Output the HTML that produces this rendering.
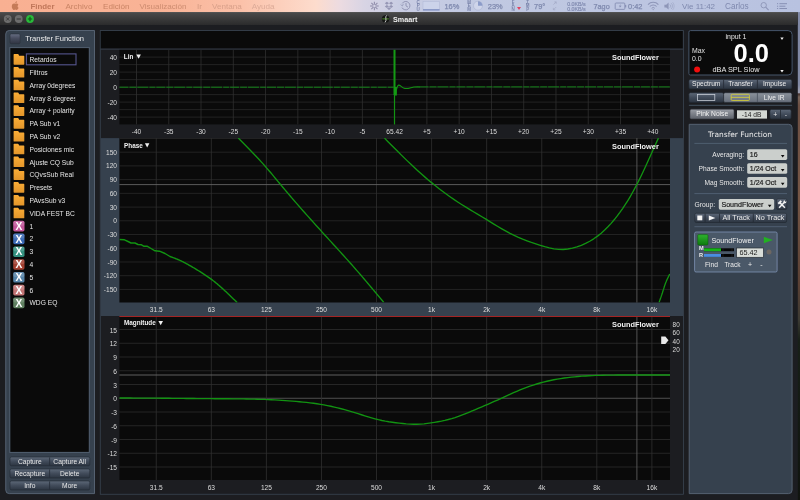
<!DOCTYPE html>
<html lang="es"><head><meta charset="utf-8"><title>Smaart</title>
<style>html,body{margin:0;padding:0;background:#1c1d21;width:800px;height:500px;overflow:hidden}svg text{white-space:pre}</style>
</head><body>
<svg width="800" height="500" viewBox="0 0 800 500" font-family="'Liberation Sans', sans-serif" style="display:block;will-change:transform">
<defs>
<linearGradient id="gMenu" x1="0" y1="0" x2="1" y2="0">
 <stop offset="0" stop-color="#f9b092"/><stop offset="0.2" stop-color="#f9b396"/>
 <stop offset="0.3" stop-color="#fbc1a9"/><stop offset="0.395" stop-color="#fddccd"/>
 <stop offset="0.425" stop-color="#ecdbe1"/><stop offset="0.455" stop-color="#d8d4e4"/><stop offset="0.5" stop-color="#c9cde3"/>
 <stop offset="0.6" stop-color="#c1c9e2"/><stop offset="1" stop-color="#b8c2e0"/>
</linearGradient>
<linearGradient id="gTitle" x1="0" y1="0" x2="0" y2="1"><stop offset="0" stop-color="#4b4b4b"/><stop offset="1" stop-color="#2b2b2c"/></linearGradient>
<linearGradient id="gStrip" x1="0" y1="0" x2="0" y2="1">
 <stop offset="0.024" stop-color="#8088a5"/><stop offset="0.17" stop-color="#8189a3"/><stop offset="0.18" stop-color="#9a9cae"/><stop offset="0.185" stop-color="#9a9cae"/>
 <stop offset="0.188" stop-color="#46322d"/><stop offset="0.194" stop-color="#78645a"/><stop offset="0.21" stop-color="#6e5044"/>
 <stop offset="0.4" stop-color="#765645"/><stop offset="0.57" stop-color="#5a4034"/>
 <stop offset="0.64" stop-color="#3c3a33"/><stop offset="0.68" stop-color="#182018"/><stop offset="1" stop-color="#10140f"/>
</linearGradient>
<linearGradient id="gBtn" x1="0" y1="0" x2="0" y2="1"><stop offset="0" stop-color="#5d6878"/><stop offset="0.5" stop-color="#414b5a"/><stop offset="1" stop-color="#2c3541"/></linearGradient>
<linearGradient id="gBtnSel" x1="0" y1="0" x2="0" y2="1"><stop offset="0" stop-color="#8b929c"/><stop offset="1" stop-color="#676f7b"/></linearGradient>
<linearGradient id="gBtnGrey" x1="0" y1="0" x2="0" y2="1"><stop offset="0" stop-color="#9a9ea6"/><stop offset="1" stop-color="#5d626b"/></linearGradient>
<linearGradient id="gChk" x1="0" y1="0" x2="0" y2="1"><stop offset="0" stop-color="#676e83"/><stop offset="0.45" stop-color="#474c5e"/><stop offset="1" stop-color="#303442"/></linearGradient>
<linearGradient id="gFolder" x1="0" y1="0" x2="0" y2="1"><stop offset="0" stop-color="#fbad36"/><stop offset="1" stop-color="#e3962b"/></linearGradient>
<linearGradient id="gGreen" x1="0" y1="0" x2="0" y2="1"><stop offset="0" stop-color="#2fb32f"/><stop offset="1" stop-color="#0d7a0d"/></linearGradient>
</defs>
<rect x="0" y="0" width="800" height="500" fill="#1c1d21"/>
<rect x="797.8" y="0" width="2.2" height="500" fill="url(#gStrip)"/>
<rect x="0" y="0" width="800" height="12.1" fill="url(#gMenu)"/>
<rect x="0" y="12.1" width="797.8" height="12.9" fill="url(#gTitle)"/>
<line x1="0" y1="12.5" x2="797.6" y2="12.5" stroke="#5a5a5a" stroke-width="0.6" />
<text x="30.4" y="9.24" font-size="7.9" fill="#c0775a" font-weight="bold" >Finder</text>
<text x="65.4" y="9.32" font-size="8.1" fill="#c98465" >Archivo</text>
<text x="103" y="9.32" font-size="8.1" fill="#c98465" >Edición</text>
<text x="139.5" y="9.32" font-size="8.1" fill="#cd8c70" >Visualización</text>
<text x="197" y="9.32" font-size="8.1" fill="#d49a82" >Ir</text>
<text x="212" y="9.32" font-size="8.1" fill="#d8a08a" >Ventana</text>
<text x="251.7" y="9.32" font-size="8.1" fill="#dcab98" >Ayuda</text>
<g fill="#c57b58"><path d="M15.2 3.9 C14.2 3.2 12 3.4 11.8 6.2 C11.7 8.2 13 10 14 9.9 C14.6 9.85 14.8 9.6 15.3 9.6 C15.8 9.6 16 9.9 16.6 9.9 C17.5 9.9 18.3 8.6 18.6 7.8 C17.3 7.2 17.3 5.3 18.4 4.7 C17.7 3.5 16.2 3.3 15.2 3.9Z"/><path d="M15.3 3.2 C15.3 2.2 16.1 1.4 17 1.3 C17.1 2.3 16.3 3.2 15.3 3.2Z"/></g>
<text x="444.4" y="9.08" font-size="7.45" fill="#7f89ae" stroke="#7f89ae" stroke-width="0.25">16%</text>
<text x="487.8" y="9.08" font-size="7.45" fill="#7f89ae" stroke="#7f89ae" stroke-width="0.25">23%</text>
<text x="534" y="9.08" font-size="7.45" fill="#7f89ae" stroke="#7f89ae" stroke-width="0.25">79°</text>
<text x="567.2" y="5.51" font-size="5.3" fill="#7d87ad" stroke="#7d87ad" stroke-width="0.15">0.0KB/s</text>
<text x="567.2" y="10.61" font-size="5.3" fill="#7d87ad" stroke="#7d87ad" stroke-width="0.15">0.0KB/s</text>
<text x="593.5" y="9.03" font-size="7.3" fill="#7f89ae" stroke="#7f89ae" stroke-width="0.25">7ago</text>
<text x="628" y="9.08" font-size="7.45" fill="#7f89ae" stroke="#7f89ae" stroke-width="0.25">0:42</text>
<text x="682" y="9.28" font-size="8" fill="#7f89ae" >Vie 11:42</text>
<text x="725" y="9.35" font-size="8.2" fill="#7f89ae" >Carlos</text>
<g stroke="#928fac" stroke-width="1.1" fill="none"><path d="M375.6 6 L378.7 6"/><path d="M375.25 6.85 L377.44 9.04"/><path d="M374.4 7.2 L374.4 10.3"/><path d="M373.55 6.85 L371.36 9.04"/><path d="M373.2 6 L370.1 6"/><path d="M373.55 5.15 L371.36 2.96"/><path d="M374.4 4.8 L374.4 1.7"/><path d="M375.25 5.15 L377.44 2.96"/></g>
<g fill="#8f8fae"><path d="M386.9 1.8 l2.1 1.5 l-2.1 1.5 l-2.1 -1.5z M391.1 1.8 l2.1 1.5 l-2.1 1.5 l-2.1 -1.5z M386.9 4.9 l2.1 1.5 l-2.1 1.5 l-2.1 -1.5z M391.1 4.9 l2.1 1.5 l-2.1 1.5 l-2.1 -1.5z M389 7.2 l2 1.4 l-2 1.5 l-2 -1.5z" opacity="0.9"/></g>
<g stroke="#8d90b0" stroke-width="0.9" fill="none"><path d="M402.2 3.4 A4.2 4.2 0 1 1 402 7.6"/><path d="M406 3 V5.9 L408 7.2"/><path d="M400.6 4.6 l1.8 1.4 l1 -2.2" stroke-width="0.7"/></g>
<text x="418.2" y="4.32" font-size="4.5" fill="#7a84ab" text-anchor="middle" font-weight="bold" >C</text>
<text x="418.2" y="7.47" font-size="4.5" fill="#7a84ab" text-anchor="middle" font-weight="bold" >P</text>
<text x="418.2" y="10.62" font-size="4.5" fill="#7a84ab" text-anchor="middle" font-weight="bold" >U</text>
<text x="469.2" y="4.32" font-size="4.5" fill="#7a84ab" text-anchor="middle" font-weight="bold" >M</text>
<text x="469.2" y="7.47" font-size="4.5" fill="#7a84ab" text-anchor="middle" font-weight="bold" >E</text>
<text x="469.2" y="10.62" font-size="4.5" fill="#7a84ab" text-anchor="middle" font-weight="bold" >M</text>
<text x="513" y="4.32" font-size="4.5" fill="#7a84ab" text-anchor="middle" font-weight="bold" >F</text>
<text x="513" y="7.47" font-size="4.5" fill="#7a84ab" text-anchor="middle" font-weight="bold" >A</text>
<text x="513" y="10.62" font-size="4.5" fill="#7a84ab" text-anchor="middle" font-weight="bold" >N</text>
<text x="527.7" y="4.32" font-size="4.5" fill="#7a84ab" text-anchor="middle" font-weight="bold" >T</text>
<text x="527.7" y="7.47" font-size="4.5" fill="#7a84ab" text-anchor="middle" font-weight="bold" >M</text>
<text x="527.7" y="10.62" font-size="4.5" fill="#7a84ab" text-anchor="middle" font-weight="bold" >P</text>
<rect x="423" y="1.4" width="16.6" height="9.2" fill="#ccd3ea" stroke="#b0b8d6" stroke-width="0.5"/>
<rect x="423" y="9" width="16.6" height="1.6" fill="#8b99c7"/>
<circle cx="478" cy="5.7" r="4.5" fill="#cfd5ea" stroke="#a9b1d0" stroke-width="0.6"/><path d="M478 5.7 V1.2 A4.5 4.5 0 0 1 482.5 5.7z" fill="#8b9bc9"/>
<path d="M519 1.8 l1.9 2.8 h-3.8z" fill="#c4c7d9"/><path d="M519 10 l2 -3 h-4z" fill="#e2425f"/>
<g stroke="#a2a9c6" stroke-width="0.7" fill="none"><path d="M553.4 4.6 L556.2 1.9 M554.3 1.9 H556.2 V3.8"/><path d="M556.2 7 L553.4 9.8 M555.3 9.8 H553.4 V7.9"/></g>
<rect x="615.2" y="3" width="9.6" height="6.4" rx="0.8" fill="none" stroke="#7f88ad" stroke-width="0.8"/><rect x="625.2" y="5" width="1" height="2.4" fill="#7f88ad"/><path d="M620.8 4 l-2 2.4 h1.5 l-0.9 1.9 l2.2 -2.6 h-1.5z" fill="#7f88ad"/>
<g stroke="#8e96b8" fill="none" stroke-width="1.1"><path d="M648 4.6 A7 7 0 0 1 658.4 4.6"/><path d="M649.8 6.5 A4.6 4.6 0 0 1 656.6 6.5"/><path d="M651.6 8.3 A2.2 2.2 0 0 1 654.8 8.3" stroke-width="1"/></g><circle cx="653.2" cy="9.6" r="0.7" fill="#8e96b8"/>
<path d="M664.4 4.7 h1.8 l2.4 -2.1 v7 l-2.4 -2.1 h-1.8z" fill="#8e96b8"/><g stroke="#9aa2c2" fill="none" stroke-width="0.7"><path d="M669.8 4.4 A2.2 2.2 0 0 1 669.8 7.8"/><path d="M671.2 3.2 A4 4 0 0 1 671.2 9"/><path d="M672.6 2.2 A5.6 5.6 0 0 1 672.6 10" opacity="0.7"/></g>
<g stroke="#8c94b6" fill="none" stroke-width="0.9"><circle cx="763.7" cy="5.2" r="2.7"/><path d="M765.7 7.2 L768.6 10.1" stroke-width="1.1"/></g>
<rect x="777.1" y="3.25" width="1" height="0.9" fill="#7c85ab"/>
<rect x="779.4" y="3.2" width="7.6" height="1" fill="#8790b4"/>
<rect x="777.1" y="5.75" width="1" height="0.9" fill="#7c85ab"/>
<rect x="779.4" y="5.7" width="6" height="1" fill="#8790b4"/>
<rect x="777.1" y="8.05" width="1" height="0.9" fill="#7c85ab"/>
<rect x="779.4" y="8" width="7.6" height="1" fill="#8790b4"/>
<circle cx="7.75" cy="19" r="3.9" fill="#6d6d6d"/>
<circle cx="18.75" cy="19" r="3.9" fill="#6d6d6d"/>
<circle cx="30" cy="19" r="3.9" fill="#29ba3a"/>
<path d="M6.2 17.4 L9.3 20.6 M9.3 17.4 L6.2 20.6" stroke="#3a3a3a" stroke-width="0.9" fill="none"/>
<line x1="16.6" y1="19" x2="20.9" y2="19" stroke="#3a3a3a" stroke-width="1.1" />
<path d="M27.8 19 H32.2 M30 16.8 V21.2" stroke="#0d5c16" stroke-width="1.2" fill="none"/>
<circle cx="385.6" cy="18.9" r="3.7" fill="#141614"/><path d="M382.3 18.9 H388.9" stroke="#4f8a2a" stroke-width="1"/><path d="M386.6 15.4 C384.4 17 387.4 20 385 22.4" stroke="#d8d8d8" stroke-width="0.9" fill="none"/>
<text x="393" y="21.59" font-size="7.2" fill="#f0f0f0" font-weight="bold" >Smaart</text>
<path d="M9.25 30.5 H94.5 V493.6 H9.25 A3.5 3.5 0 0 1 5.75 490.1 V34 A3.5 3.5 0 0 1 9.25 30.5Z" fill="#36414e" stroke="#5a6878" stroke-width="0.9"/>
<rect x="10" y="33.9" width="10.1" height="9.8" fill="url(#gChk)" rx="1.2" stroke="#2a303b" stroke-width="0.6"/>
<text x="25.2" y="41.42" font-size="7.56" fill="#ececec" >Transfer Function</text>
<rect x="9.8" y="47.6" width="79.5" height="404.8" fill="#0a0a0a" stroke="#536172" stroke-width="1"/>
<clipPath id="cList"><rect x="10.2" y="48" width="65" height="404"/></clipPath>
<rect x="26.4" y="53.9" width="49.6" height="10.9" fill="#0a0a0a" stroke="#56568f" stroke-width="1.1"/>
<g clip-path="url(#cList)">
<path d="M13.6 56.3 v-1.6 q0 -0.6 0.6 -0.6 h3.7 q0.5 0 0.7 0.5 l0.5 1.2 h4.6 q0.6 0 0.6 0.6 v7.7 q0 0.6 -0.6 0.6 h-9.5 q-0.6 0 -0.6 -0.6 z" fill="url(#gFolder)"/>
<text x="29.5" y="62.21" font-size="6.7" fill="#e6e6e6" >Retardos</text>
<path d="M13.6 69.1 v-1.6 q0 -0.6 0.6 -0.6 h3.7 q0.5 0 0.7 0.5 l0.5 1.2 h4.6 q0.6 0 0.6 0.6 v7.7 q0 0.6 -0.6 0.6 h-9.5 q-0.6 0 -0.6 -0.6 z" fill="url(#gFolder)"/>
<text x="29.5" y="75.01" font-size="6.7" fill="#e6e6e6" >Filtros</text>
<path d="M13.6 81.9 v-1.6 q0 -0.6 0.6 -0.6 h3.7 q0.5 0 0.7 0.5 l0.5 1.2 h4.6 q0.6 0 0.6 0.6 v7.7 q0 0.6 -0.6 0.6 h-9.5 q-0.6 0 -0.6 -0.6 z" fill="url(#gFolder)"/>
<text x="29.5" y="87.81" font-size="6.7" fill="#e6e6e6" >Array 0degrees</text>
<path d="M13.6 94.7 v-1.6 q0 -0.6 0.6 -0.6 h3.7 q0.5 0 0.7 0.5 l0.5 1.2 h4.6 q0.6 0 0.6 0.6 v7.7 q0 0.6 -0.6 0.6 h-9.5 q-0.6 0 -0.6 -0.6 z" fill="url(#gFolder)"/>
<text x="29.5" y="100.61" font-size="6.7" fill="#e6e6e6" >Array 8 degrees</text>
<path d="M13.6 107.5 v-1.6 q0 -0.6 0.6 -0.6 h3.7 q0.5 0 0.7 0.5 l0.5 1.2 h4.6 q0.6 0 0.6 0.6 v7.7 q0 0.6 -0.6 0.6 h-9.5 q-0.6 0 -0.6 -0.6 z" fill="url(#gFolder)"/>
<text x="29.5" y="113.41" font-size="6.7" fill="#e6e6e6" >Array + polarity</text>
<path d="M13.6 120.3 v-1.6 q0 -0.6 0.6 -0.6 h3.7 q0.5 0 0.7 0.5 l0.5 1.2 h4.6 q0.6 0 0.6 0.6 v7.7 q0 0.6 -0.6 0.6 h-9.5 q-0.6 0 -0.6 -0.6 z" fill="url(#gFolder)"/>
<text x="29.5" y="126.21" font-size="6.7" fill="#e6e6e6" >PA Sub v1</text>
<path d="M13.6 133.1 v-1.6 q0 -0.6 0.6 -0.6 h3.7 q0.5 0 0.7 0.5 l0.5 1.2 h4.6 q0.6 0 0.6 0.6 v7.7 q0 0.6 -0.6 0.6 h-9.5 q-0.6 0 -0.6 -0.6 z" fill="url(#gFolder)"/>
<text x="29.5" y="139.01" font-size="6.7" fill="#e6e6e6" >PA Sub v2</text>
<path d="M13.6 145.9 v-1.6 q0 -0.6 0.6 -0.6 h3.7 q0.5 0 0.7 0.5 l0.5 1.2 h4.6 q0.6 0 0.6 0.6 v7.7 q0 0.6 -0.6 0.6 h-9.5 q-0.6 0 -0.6 -0.6 z" fill="url(#gFolder)"/>
<text x="29.5" y="151.81" font-size="6.7" fill="#e6e6e6" >Posiciones mic</text>
<path d="M13.6 158.7 v-1.6 q0 -0.6 0.6 -0.6 h3.7 q0.5 0 0.7 0.5 l0.5 1.2 h4.6 q0.6 0 0.6 0.6 v7.7 q0 0.6 -0.6 0.6 h-9.5 q-0.6 0 -0.6 -0.6 z" fill="url(#gFolder)"/>
<text x="29.5" y="164.61" font-size="6.7" fill="#e6e6e6" >Ajuste CQ Sub</text>
<path d="M13.6 171.5 v-1.6 q0 -0.6 0.6 -0.6 h3.7 q0.5 0 0.7 0.5 l0.5 1.2 h4.6 q0.6 0 0.6 0.6 v7.7 q0 0.6 -0.6 0.6 h-9.5 q-0.6 0 -0.6 -0.6 z" fill="url(#gFolder)"/>
<text x="29.5" y="177.41" font-size="6.7" fill="#e6e6e6" >CQvsSub Real</text>
<path d="M13.6 184.3 v-1.6 q0 -0.6 0.6 -0.6 h3.7 q0.5 0 0.7 0.5 l0.5 1.2 h4.6 q0.6 0 0.6 0.6 v7.7 q0 0.6 -0.6 0.6 h-9.5 q-0.6 0 -0.6 -0.6 z" fill="url(#gFolder)"/>
<text x="29.5" y="190.21" font-size="6.7" fill="#e6e6e6" >Presets</text>
<path d="M13.6 197.1 v-1.6 q0 -0.6 0.6 -0.6 h3.7 q0.5 0 0.7 0.5 l0.5 1.2 h4.6 q0.6 0 0.6 0.6 v7.7 q0 0.6 -0.6 0.6 h-9.5 q-0.6 0 -0.6 -0.6 z" fill="url(#gFolder)"/>
<text x="29.5" y="203.01" font-size="6.7" fill="#e6e6e6" >PAvsSub v3</text>
<path d="M13.6 209.9 v-1.6 q0 -0.6 0.6 -0.6 h3.7 q0.5 0 0.7 0.5 l0.5 1.2 h4.6 q0.6 0 0.6 0.6 v7.7 q0 0.6 -0.6 0.6 h-9.5 q-0.6 0 -0.6 -0.6 z" fill="url(#gFolder)"/>
<text x="29.5" y="215.81" font-size="6.7" fill="#e6e6e6" >VIDA FEST BC</text>
<rect x="13.2" y="220.8" width="11.3" height="10.6" fill="#c2559a" rx="1.7"/>
<rect x="13.2" y="220.8" width="11.3" height="4.9" fill="#ffffff" rx="1.7" opacity="0.13"/>
<text x="18.85" y="229.77" font-size="10.2" fill="#ffffff" text-anchor="middle" font-weight="bold" >X</text>
<text x="29.5" y="228.61" font-size="6.7" fill="#e6e6e6" >1</text>
<rect x="13.2" y="233.6" width="11.3" height="10.6" fill="#3a69b4" rx="1.7"/>
<rect x="13.2" y="233.6" width="11.3" height="4.9" fill="#ffffff" rx="1.7" opacity="0.13"/>
<text x="18.85" y="242.57" font-size="10.2" fill="#ffffff" text-anchor="middle" font-weight="bold" >X</text>
<text x="29.5" y="241.41" font-size="6.7" fill="#e6e6e6" >2</text>
<rect x="13.2" y="246.4" width="11.3" height="10.6" fill="#33917f" rx="1.7"/>
<rect x="13.2" y="246.4" width="11.3" height="4.9" fill="#ffffff" rx="1.7" opacity="0.13"/>
<text x="18.85" y="255.37" font-size="10.2" fill="#ffffff" text-anchor="middle" font-weight="bold" >X</text>
<text x="29.5" y="254.21" font-size="6.7" fill="#e6e6e6" >3</text>
<rect x="13.2" y="259.2" width="11.3" height="10.6" fill="#a23f30" rx="1.7"/>
<rect x="13.2" y="259.2" width="11.3" height="4.9" fill="#ffffff" rx="1.7" opacity="0.13"/>
<text x="18.85" y="268.17" font-size="10.2" fill="#ffffff" text-anchor="middle" font-weight="bold" >X</text>
<text x="29.5" y="267.01" font-size="6.7" fill="#e6e6e6" >4</text>
<rect x="13.2" y="272" width="11.3" height="10.6" fill="#5482a6" rx="1.7"/>
<rect x="13.2" y="272" width="11.3" height="4.9" fill="#ffffff" rx="1.7" opacity="0.13"/>
<text x="18.85" y="280.97" font-size="10.2" fill="#ffffff" text-anchor="middle" font-weight="bold" >X</text>
<text x="29.5" y="279.81" font-size="6.7" fill="#e6e6e6" >5</text>
<rect x="13.2" y="284.8" width="11.3" height="10.6" fill="#c27474" rx="1.7"/>
<rect x="13.2" y="284.8" width="11.3" height="4.9" fill="#ffffff" rx="1.7" opacity="0.13"/>
<text x="18.85" y="293.77" font-size="10.2" fill="#ffffff" text-anchor="middle" font-weight="bold" >X</text>
<text x="29.5" y="292.61" font-size="6.7" fill="#e6e6e6" >6</text>
<rect x="13.2" y="297.6" width="11.3" height="10.6" fill="#5f8060" rx="1.7"/>
<rect x="13.2" y="297.6" width="11.3" height="4.9" fill="#ffffff" rx="1.7" opacity="0.13"/>
<text x="18.85" y="306.57" font-size="10.2" fill="#ffffff" text-anchor="middle" font-weight="bold" >X</text>
<text x="29.5" y="305.41" font-size="6.7" fill="#e6e6e6" >WDG EQ</text>
</g>
<rect x="10" y="457" width="79.8" height="8.8" fill="url(#gBtn)" rx="1.5" stroke="#222a34" stroke-width="0.6"/>
<line x1="49.6" y1="457.4" x2="49.6" y2="465.4" stroke="#252c37" stroke-width="0.8" />
<text x="29.8" y="463.59" font-size="6.65" fill="#e8e8e8" text-anchor="middle" >Capture</text>
<text x="69.7" y="463.61" font-size="6.7" fill="#e8e8e8" text-anchor="middle" >Capture All</text>
<rect x="10" y="469" width="79.8" height="9" fill="url(#gBtn)" rx="1.5" stroke="#222a34" stroke-width="0.6"/>
<line x1="49.6" y1="469.4" x2="49.6" y2="477.6" stroke="#252c37" stroke-width="0.8" />
<text x="29.8" y="475.79" font-size="6.65" fill="#e8e8e8" text-anchor="middle" >Recapture</text>
<text x="69.7" y="475.81" font-size="6.7" fill="#e8e8e8" text-anchor="middle" >Delete</text>
<rect x="10" y="481" width="79.8" height="9" fill="url(#gBtn)" rx="1.5" stroke="#222a34" stroke-width="0.6"/>
<line x1="49.6" y1="481.4" x2="49.6" y2="489.6" stroke="#252c37" stroke-width="0.8" />
<text x="29.8" y="487.99" font-size="6.65" fill="#e8e8e8" text-anchor="middle" >Info</text>
<text x="69.7" y="488.01" font-size="6.7" fill="#e8e8e8" text-anchor="middle" >More</text>
<rect x="100.25" y="30.6" width="583.15" height="463.65" fill="#1c1d21" stroke="#3a4552" stroke-width="0.8"/>
<rect x="100.8" y="31" width="581.8" height="17.6" fill="#0a0a0a"/>
<line x1="100.6" y1="49.1" x2="683" y2="49.1" stroke="#3a4450" stroke-width="0.9" />
<rect x="119.4" y="49.8" width="550.6" height="74.6" fill="#0a0a0a"/>
<line x1="119.4" y1="57.1" x2="670" y2="57.1" stroke="#292929" stroke-width="0.8" />
<line x1="119.4" y1="64.6" x2="670" y2="64.6" stroke="#292929" stroke-width="0.8" />
<line x1="119.4" y1="72.1" x2="670" y2="72.1" stroke="#292929" stroke-width="0.8" />
<line x1="119.4" y1="79.6" x2="670" y2="79.6" stroke="#292929" stroke-width="0.8" />
<line x1="119.4" y1="87.1" x2="670" y2="87.1" stroke="#292929" stroke-width="0.8" />
<line x1="119.4" y1="94.6" x2="670" y2="94.6" stroke="#292929" stroke-width="0.8" />
<line x1="119.4" y1="102.1" x2="670" y2="102.1" stroke="#292929" stroke-width="0.8" />
<line x1="119.4" y1="109.6" x2="670" y2="109.6" stroke="#292929" stroke-width="0.8" />
<line x1="119.4" y1="117.1" x2="670" y2="117.1" stroke="#292929" stroke-width="0.8" />
<line x1="136.5" y1="49.8" x2="136.5" y2="124.4" stroke="#303030" stroke-width="0.8" />
<line x1="168.77" y1="49.8" x2="168.77" y2="124.4" stroke="#303030" stroke-width="0.8" />
<line x1="201.03" y1="49.8" x2="201.03" y2="124.4" stroke="#303030" stroke-width="0.8" />
<line x1="233.3" y1="49.8" x2="233.3" y2="124.4" stroke="#303030" stroke-width="0.8" />
<line x1="265.56" y1="49.8" x2="265.56" y2="124.4" stroke="#303030" stroke-width="0.8" />
<line x1="297.83" y1="49.8" x2="297.83" y2="124.4" stroke="#303030" stroke-width="0.8" />
<line x1="330.1" y1="49.8" x2="330.1" y2="124.4" stroke="#303030" stroke-width="0.8" />
<line x1="362.36" y1="49.8" x2="362.36" y2="124.4" stroke="#303030" stroke-width="0.8" />
<line x1="394.63" y1="49.8" x2="394.63" y2="124.4" stroke="#303030" stroke-width="0.8" />
<line x1="426.89" y1="49.8" x2="426.89" y2="124.4" stroke="#303030" stroke-width="0.8" />
<line x1="459.16" y1="49.8" x2="459.16" y2="124.4" stroke="#303030" stroke-width="0.8" />
<line x1="491.43" y1="49.8" x2="491.43" y2="124.4" stroke="#303030" stroke-width="0.8" />
<line x1="523.69" y1="49.8" x2="523.69" y2="124.4" stroke="#303030" stroke-width="0.8" />
<line x1="555.96" y1="49.8" x2="555.96" y2="124.4" stroke="#303030" stroke-width="0.8" />
<line x1="588.22" y1="49.8" x2="588.22" y2="124.4" stroke="#303030" stroke-width="0.8" />
<line x1="620.49" y1="49.8" x2="620.49" y2="124.4" stroke="#303030" stroke-width="0.8" />
<line x1="652.76" y1="49.8" x2="652.76" y2="124.4" stroke="#303030" stroke-width="0.8" />
<text x="117" y="59.98" font-size="6.6" fill="#dcdcdc" text-anchor="end" >40</text>
<text x="117" y="74.98" font-size="6.6" fill="#dcdcdc" text-anchor="end" >20</text>
<text x="117" y="89.98" font-size="6.6" fill="#dcdcdc" text-anchor="end" >0</text>
<text x="117" y="104.98" font-size="6.6" fill="#dcdcdc" text-anchor="end" >-20</text>
<text x="117" y="119.98" font-size="6.6" fill="#dcdcdc" text-anchor="end" >-40</text>
<text x="136.5" y="134.28" font-size="6.6" fill="#dcdcdc" text-anchor="middle" >-40</text>
<text x="168.77" y="134.28" font-size="6.6" fill="#dcdcdc" text-anchor="middle" >-35</text>
<text x="201.03" y="134.28" font-size="6.6" fill="#dcdcdc" text-anchor="middle" >-30</text>
<text x="233.3" y="134.28" font-size="6.6" fill="#dcdcdc" text-anchor="middle" >-25</text>
<text x="265.56" y="134.28" font-size="6.6" fill="#dcdcdc" text-anchor="middle" >-20</text>
<text x="297.83" y="134.28" font-size="6.6" fill="#dcdcdc" text-anchor="middle" >-15</text>
<text x="330.1" y="134.28" font-size="6.6" fill="#dcdcdc" text-anchor="middle" >-10</text>
<text x="362.36" y="134.28" font-size="6.6" fill="#dcdcdc" text-anchor="middle" >-5</text>
<text x="394.63" y="134.28" font-size="6.6" fill="#dcdcdc" text-anchor="middle" >65.42</text>
<text x="426.89" y="134.28" font-size="6.6" fill="#dcdcdc" text-anchor="middle" >+5</text>
<text x="459.16" y="134.28" font-size="6.6" fill="#dcdcdc" text-anchor="middle" >+10</text>
<text x="491.43" y="134.28" font-size="6.6" fill="#dcdcdc" text-anchor="middle" >+15</text>
<text x="523.69" y="134.28" font-size="6.6" fill="#dcdcdc" text-anchor="middle" >+20</text>
<text x="555.96" y="134.28" font-size="6.6" fill="#dcdcdc" text-anchor="middle" >+25</text>
<text x="588.22" y="134.28" font-size="6.6" fill="#dcdcdc" text-anchor="middle" >+30</text>
<text x="620.49" y="134.28" font-size="6.6" fill="#dcdcdc" text-anchor="middle" >+35</text>
<text x="652.76" y="134.28" font-size="6.6" fill="#dcdcdc" text-anchor="middle" >+40</text>
<text x="123.8" y="58.9" font-size="6.4" fill="#f0f0f0" font-weight="bold" >Lin</text>
<path d="M136.3 54.5 h4.6 l-2.3 4.2z" fill="#f0f0f0"/>
<text x="658.8" y="59.66" font-size="7.38" fill="#f0f0f0" text-anchor="end" font-weight="bold" >SoundFlower</text>
<line x1="119.4" y1="87.2" x2="393.6" y2="87.2" stroke="#139018" stroke-width="0.9" stroke-dasharray="9 1 7 0.9 11 1.1 6 0.9"/>
<path d="M394.5 95 V124.4" stroke="#129312" stroke-width="1.2" fill="none"/>
<path d="M394.5 49.8 V95" stroke="#149a14" stroke-width="2" fill="none"/>
<path d="M394.3 87 L397 87 L396.8 95.4 L394.3 95.4 Z" fill="#149a14"/>
<path d="M396.6 89.5 C397.2 86.2 398 85.1 398.8 85.1 C400.2 85.1 401.5 87 403.5 87.9 C405.5 88.7 408 88.5 410 87.9 C412.5 87.2 415 86.8 418 86.8 L420 86.9" stroke="#129312" stroke-width="1.05" fill="none"/>
<line x1="419.5" y1="86.9" x2="670" y2="86.9" stroke="#139018" stroke-width="0.9" stroke-dasharray="9 1 7 0.9 11 1.1 6 0.9"/>
<rect x="100.7" y="138.1" width="582.3" height="177.9" fill="#36414e"/>
<rect x="119.4" y="138.1" width="550.6" height="164.4" fill="#0a0a0a"/>
<line x1="119.4" y1="289.43" x2="670" y2="289.43" stroke="#292929" stroke-width="0.8" />
<line x1="119.4" y1="275.7" x2="670" y2="275.7" stroke="#292929" stroke-width="0.8" />
<line x1="119.4" y1="261.98" x2="670" y2="261.98" stroke="#292929" stroke-width="0.8" />
<line x1="119.4" y1="248.25" x2="670" y2="248.25" stroke="#292929" stroke-width="0.8" />
<line x1="119.4" y1="234.53" x2="670" y2="234.53" stroke="#292929" stroke-width="0.8" />
<line x1="119.4" y1="220.8" x2="670" y2="220.8" stroke="#292929" stroke-width="0.8" />
<line x1="119.4" y1="207.08" x2="670" y2="207.08" stroke="#292929" stroke-width="0.8" />
<line x1="119.4" y1="193.35" x2="670" y2="193.35" stroke="#292929" stroke-width="0.8" />
<line x1="119.4" y1="179.62" x2="670" y2="179.62" stroke="#292929" stroke-width="0.8" />
<line x1="119.4" y1="165.9" x2="670" y2="165.9" stroke="#292929" stroke-width="0.8" />
<line x1="119.4" y1="152.18" x2="670" y2="152.18" stroke="#292929" stroke-width="0.8" />
<line x1="119.4" y1="138.45" x2="670" y2="138.45" stroke="#292929" stroke-width="0.8" />
<line x1="156.25" y1="138.1" x2="156.25" y2="302.5" stroke="#303030" stroke-width="0.8" />
<line x1="211.32" y1="138.1" x2="211.32" y2="302.5" stroke="#303030" stroke-width="0.8" />
<line x1="266.39" y1="138.1" x2="266.39" y2="302.5" stroke="#303030" stroke-width="0.8" />
<line x1="321.46" y1="138.1" x2="321.46" y2="302.5" stroke="#303030" stroke-width="0.8" />
<line x1="376.53" y1="138.1" x2="376.53" y2="302.5" stroke="#303030" stroke-width="0.8" />
<line x1="431.6" y1="138.1" x2="431.6" y2="302.5" stroke="#303030" stroke-width="0.8" />
<line x1="486.67" y1="138.1" x2="486.67" y2="302.5" stroke="#303030" stroke-width="0.8" />
<line x1="541.74" y1="138.1" x2="541.74" y2="302.5" stroke="#303030" stroke-width="0.8" />
<line x1="596.81" y1="138.1" x2="596.81" y2="302.5" stroke="#303030" stroke-width="0.8" />
<line x1="651.88" y1="138.1" x2="651.88" y2="302.5" stroke="#303030" stroke-width="0.8" />
<text x="117" y="292" font-size="6.6" fill="#dcdcdc" text-anchor="end" >-150</text>
<text x="117" y="278.28" font-size="6.6" fill="#dcdcdc" text-anchor="end" >-120</text>
<text x="117" y="264.55" font-size="6.6" fill="#dcdcdc" text-anchor="end" >-90</text>
<text x="117" y="250.83" font-size="6.6" fill="#dcdcdc" text-anchor="end" >-60</text>
<text x="117" y="237.1" font-size="6.6" fill="#dcdcdc" text-anchor="end" >-30</text>
<text x="117" y="223.38" font-size="6.6" fill="#dcdcdc" text-anchor="end" >0</text>
<text x="117" y="209.65" font-size="6.6" fill="#dcdcdc" text-anchor="end" >30</text>
<text x="117" y="195.93" font-size="6.6" fill="#dcdcdc" text-anchor="end" >60</text>
<text x="117" y="182.2" font-size="6.6" fill="#dcdcdc" text-anchor="end" >90</text>
<text x="117" y="168.48" font-size="6.6" fill="#dcdcdc" text-anchor="end" >120</text>
<text x="117" y="154.75" font-size="6.6" fill="#dcdcdc" text-anchor="end" >150</text>
<text x="156.25" y="312.18" font-size="6.6" fill="#dcdcdc" text-anchor="middle" >31.5</text>
<text x="211.32" y="312.18" font-size="6.6" fill="#dcdcdc" text-anchor="middle" >63</text>
<text x="266.39" y="312.18" font-size="6.6" fill="#dcdcdc" text-anchor="middle" >125</text>
<text x="321.46" y="312.18" font-size="6.6" fill="#dcdcdc" text-anchor="middle" >250</text>
<text x="376.53" y="312.18" font-size="6.6" fill="#dcdcdc" text-anchor="middle" >500</text>
<text x="431.6" y="312.18" font-size="6.6" fill="#dcdcdc" text-anchor="middle" >1k</text>
<text x="486.67" y="312.18" font-size="6.6" fill="#dcdcdc" text-anchor="middle" >2k</text>
<text x="541.74" y="312.18" font-size="6.6" fill="#dcdcdc" text-anchor="middle" >4k</text>
<text x="596.81" y="312.18" font-size="6.6" fill="#dcdcdc" text-anchor="middle" >8k</text>
<text x="651.88" y="312.18" font-size="6.6" fill="#dcdcdc" text-anchor="middle" >16k</text>
<line x1="119.4" y1="184.6" x2="670" y2="184.6" stroke="#646464" stroke-width="0.9" />
<line x1="636.9" y1="138.1" x2="636.9" y2="302.5" stroke="#5c5c5c" stroke-width="0.9" />
<clipPath id="cPh"><rect x="119.4" y="138.1" width="550.6" height="164.4"/></clipPath>
<path d="M119.4 239.5 L124.5 239.8 L128 241.5 L131 243 L135 243 L138 244.5 L141.5 244.8 L144 246.3 L147 246.2 L151 248.5 L155 250.8 L159.5 251.2 L165 253.5 L170 256.5 L173.74 257.84 L174.57 258.16 L175.4 258.48 L176.23 258.81 L177.05 259.15 L177.87 259.49 L178.68 259.85 L179.5 260.21 L180.31 260.58 L181.11 260.96 L181.91 261.34 L182.71 261.73 L183.51 262.13 L184.3 262.53 L185.09 262.94 L185.87 263.36 L186.65 263.78 L187.43 264.21 L188.21 264.64 L188.98 265.08 L189.76 265.52 L190.53 265.96 L191.29 266.4 L192.06 266.85 L192.83 267.31 L193.59 267.76 L194.36 268.21 L195.12 268.67 L195.89 269.13 L196.65 269.59 L197.41 270.05 L198.17 270.51 L198.93 270.98 L199.68 271.45 L200.44 271.92 L201.19 272.39 L201.94 272.87 L202.69 273.35 L203.44 273.83 L204.18 274.32 L204.93 274.81 L205.67 275.3 L206.4 275.8 L207.14 276.3 L207.87 276.8 L208.6 277.31 L209.32 277.83 L210.04 278.35 L210.76 278.87 L211.47 279.4 L212.18 279.93 L212.89 280.47 L213.59 281.01 L214.29 281.56 L214.99 282.12 L215.68 282.67 L216.36 283.24 L217.05 283.81 L217.73 284.38 L218.4 284.95 L219.08 285.53 L219.75 286.12 L220.42 286.7 L221.08 287.29 L221.75 287.89 L222.41 288.48 L223.07 289.08 L223.72 289.68 L224.38 290.28 L225.03 290.89 L225.68 291.5 L226.33 292.11 L226.97 292.72 L227.62 293.33 L228.26 293.94 L228.91 294.56 L229.55 295.17 L230.19 295.79 L230.83 296.4 L231.47 297.02 L232.11 297.64 L232.75 298.26 L233.38 298.88 L234.02 299.5 L234.66 300.12 L235.29 300.74 L235.93 301.36 L236.56 301.98 L237.2 302.6" stroke="#129312" stroke-width="1.4" fill="none" stroke-linejoin="round" clip-path="url(#cPh)"/>
<path d="M238.3 138.1 L240.26 140.07 L242.22 142.04 L244.18 144.02 L246.14 146 L248.08 147.98 L250.03 149.97 L251.96 151.96 L253.89 153.97 L255.8 155.98 L257.7 158.01 L259.59 160.04 L261.47 162.09 L263.33 164.16 L265.17 166.23 L266.99 168.33 L268.8 170.44 L270.59 172.56 L272.38 174.69 L274.15 176.83 L275.92 178.97 L277.69 181.11 L279.47 183.25 L281.24 185.39 L283.02 187.52 L284.81 189.65 L286.6 191.78 L288.4 193.89 L290.21 196.01 L292.02 198.12 L293.83 200.22 L295.65 202.32 L297.47 204.42 L299.3 206.51 L301.13 208.6 L302.97 210.69 L304.81 212.77 L306.65 214.85 L308.5 216.92 L310.35 218.99 L312.21 221.06 L314.06 223.13 L315.93 225.2 L317.79 227.26 L319.65 229.32 L321.52 231.37 L323.39 233.43 L325.26 235.48 L327.14 237.54 L329.01 239.59 L330.89 241.64 L332.76 243.69 L334.63 245.75 L336.5 247.8 L338.37 249.85 L340.24 251.91 L342.11 253.97 L343.97 256.03 L345.83 258.1 L347.69 260.17 L349.54 262.24 L351.38 264.31 L353.22 266.4 L355.06 268.48 L356.89 270.57 L358.71 272.67 L360.53 274.77 L362.34 276.88 L364.14 278.99 L365.94 281.11 L367.74 283.23 L369.53 285.35 L371.33 287.47 L373.11 289.6 L374.9 291.73 L376.68 293.86 L378.46 296 L380.24 298.13 L382.02 300.26 L383.8 302.4" stroke="#129312" stroke-width="1.35" fill="none" stroke-linejoin="round" clip-path="url(#cPh)"/>
<path d="M384.5 138.1 L387.76 141.42 L391.03 144.74 L394.31 148.05 L397.6 151.34 L400.9 154.62 L404.22 157.89 L407.57 161.13 L410.94 164.34 L414.34 167.52 L417.77 170.68 L421.23 173.79 L424.73 176.87 L428.26 179.9 L431.84 182.88 L435.46 185.82 L439.12 188.7 L442.83 191.52 L446.58 194.29 L450.37 196.99 L454.2 199.63 L458.08 202.2 L462 204.71 L465.94 207.17 L469.92 209.6 L473.9 212 L477.9 214.4 L481.9 216.79 L485.9 219.19 L489.88 221.62 L493.87 224.05 L497.86 226.46 L501.87 228.82 L505.93 231.11 L510.02 233.3 L514.18 235.36 L518.4 237.3 L522.67 239.11 L527 240.81 L531.38 242.42 L535.81 243.93 L540.28 245.36 L544.78 246.71 L549.32 247.92 L553.89 248.85 L558.5 249.41 L563.13 249.47 L567.77 249.02 L572.38 248.13 L576.9 246.87 L581.31 245.29 L585.6 243.4 L589.74 241.24 L593.72 238.8 L597.54 236.12 L601.17 233.21 L604.64 230.09 L607.96 226.8 L611.13 223.36 L614.17 219.8 L617.08 216.13 L619.88 212.39 L622.58 208.58 L625.17 204.71 L627.67 200.77 L630.08 196.78 L632.4 192.75 L634.65 188.67 L636.83 184.55 L638.94 180.4 L640.99 176.22 L643 172.02 L644.97 167.8 L646.91 163.57 L648.83 159.33 L650.75 155.08 L652.66 150.84 L654.58 146.59 L656.49 142.35 L658.4 138.1" stroke="#129312" stroke-width="1.35" fill="none" stroke-linejoin="round" clip-path="url(#cPh)"/>
<path d="M659 302.4 L659.13 302.04 L659.27 301.68 L659.4 301.32 L659.54 300.96 L659.67 300.59 L659.8 300.23 L659.94 299.87 L660.07 299.51 L660.2 299.15 L660.33 298.79 L660.46 298.43 L660.6 298.06 L660.73 297.7 L660.85 297.34 L660.98 296.97 L661.11 296.61 L661.24 296.25 L661.36 295.88 L661.49 295.52 L661.61 295.16 L661.74 294.79 L661.86 294.42 L661.98 294.06 L662.1 293.69 L662.22 293.33 L662.34 292.96 L662.45 292.59 L662.57 292.22 L662.69 291.85 L662.8 291.49 L662.92 291.12 L663.03 290.75 L663.14 290.38 L663.26 290.01 L663.37 289.64 L663.49 289.28 L663.6 288.91 L663.72 288.54 L663.83 288.17 L663.95 287.8 L664.07 287.44 L664.18 287.07 L664.3 286.7 L664.42 286.34 L664.54 285.97 L664.67 285.61 L664.79 285.24 L664.92 284.88 L665.05 284.52 L665.18 284.16 L665.31 283.79 L665.44 283.43 L665.58 283.07 L665.72 282.72 L665.86 282.36 L666 282 L666.15 281.65 L666.29 281.29 L666.44 280.94 L666.6 280.58 L666.75 280.23 L666.91 279.88 L667.07 279.53 L667.23 279.18 L667.4 278.83 L667.56 278.49 L667.73 278.14 L667.89 277.79 L668.06 277.45 L668.23 277.1 L668.41 276.75 L668.58 276.41 L668.75 276.06 L668.92 275.72 L669.1 275.38 L669.27 275.03 L669.45 274.69 L669.62 274.34 L669.8 274" stroke="#129312" stroke-width="1.35" fill="none" stroke-linejoin="round" clip-path="url(#cPh)"/>
<text x="124" y="147.6" font-size="6.4" fill="#f0f0f0" font-weight="bold" >Phase</text>
<path d="M144.9 143.2 h4.5 l-2.25 4.2z" fill="#f0f0f0"/>
<text x="658.8" y="148.96" font-size="7.38" fill="#f0f0f0" text-anchor="end" font-weight="bold" >SoundFlower</text>
<rect x="119.4" y="316.9" width="550.6" height="163.1" fill="#0a0a0a"/>
<line x1="119.4" y1="316.5" x2="670" y2="316.5" stroke="#a32424" stroke-width="1" />
<line x1="119.4" y1="467" x2="670" y2="467" stroke="#292929" stroke-width="0.9" />
<line x1="119.4" y1="453.25" x2="670" y2="453.25" stroke="#292929" stroke-width="0.9" />
<line x1="119.4" y1="439.5" x2="670" y2="439.5" stroke="#292929" stroke-width="0.9" />
<line x1="119.4" y1="425.75" x2="670" y2="425.75" stroke="#292929" stroke-width="0.9" />
<line x1="119.4" y1="412" x2="670" y2="412" stroke="#292929" stroke-width="0.9" />
<line x1="119.4" y1="398.25" x2="670" y2="398.25" stroke="#585858" stroke-width="0.9" />
<line x1="119.4" y1="384.5" x2="670" y2="384.5" stroke="#292929" stroke-width="0.9" />
<line x1="119.4" y1="370.75" x2="670" y2="370.75" stroke="#292929" stroke-width="0.9" />
<line x1="119.4" y1="357" x2="670" y2="357" stroke="#292929" stroke-width="0.9" />
<line x1="119.4" y1="343.25" x2="670" y2="343.25" stroke="#292929" stroke-width="0.9" />
<line x1="119.4" y1="329.5" x2="670" y2="329.5" stroke="#292929" stroke-width="0.9" />
<line x1="156.25" y1="317" x2="156.25" y2="480" stroke="#303030" stroke-width="0.8" />
<line x1="211.32" y1="317" x2="211.32" y2="480" stroke="#303030" stroke-width="0.8" />
<line x1="266.39" y1="317" x2="266.39" y2="480" stroke="#303030" stroke-width="0.8" />
<line x1="321.46" y1="317" x2="321.46" y2="480" stroke="#303030" stroke-width="0.8" />
<line x1="376.53" y1="317" x2="376.53" y2="480" stroke="#303030" stroke-width="0.8" />
<line x1="431.6" y1="317" x2="431.6" y2="480" stroke="#303030" stroke-width="0.8" />
<line x1="486.67" y1="317" x2="486.67" y2="480" stroke="#303030" stroke-width="0.8" />
<line x1="541.74" y1="317" x2="541.74" y2="480" stroke="#303030" stroke-width="0.8" />
<line x1="596.81" y1="317" x2="596.81" y2="480" stroke="#303030" stroke-width="0.8" />
<line x1="651.88" y1="317" x2="651.88" y2="480" stroke="#303030" stroke-width="0.8" />
<text x="117" y="470.07" font-size="6.6" fill="#dcdcdc" text-anchor="end" >-15</text>
<text x="117" y="456.32" font-size="6.6" fill="#dcdcdc" text-anchor="end" >-12</text>
<text x="117" y="442.57" font-size="6.6" fill="#dcdcdc" text-anchor="end" >-9</text>
<text x="117" y="428.82" font-size="6.6" fill="#dcdcdc" text-anchor="end" >-6</text>
<text x="117" y="415.07" font-size="6.6" fill="#dcdcdc" text-anchor="end" >-3</text>
<text x="117" y="401.33" font-size="6.6" fill="#dcdcdc" text-anchor="end" >0</text>
<text x="117" y="387.58" font-size="6.6" fill="#dcdcdc" text-anchor="end" >3</text>
<text x="117" y="373.83" font-size="6.6" fill="#dcdcdc" text-anchor="end" >6</text>
<text x="117" y="360.08" font-size="6.6" fill="#dcdcdc" text-anchor="end" >9</text>
<text x="117" y="346.33" font-size="6.6" fill="#dcdcdc" text-anchor="end" >12</text>
<text x="117" y="332.58" font-size="6.6" fill="#dcdcdc" text-anchor="end" >15</text>
<text x="156.25" y="489.78" font-size="6.6" fill="#dcdcdc" text-anchor="middle" >31.5</text>
<text x="211.32" y="489.78" font-size="6.6" fill="#dcdcdc" text-anchor="middle" >63</text>
<text x="266.39" y="489.78" font-size="6.6" fill="#dcdcdc" text-anchor="middle" >125</text>
<text x="321.46" y="489.78" font-size="6.6" fill="#dcdcdc" text-anchor="middle" >250</text>
<text x="376.53" y="489.78" font-size="6.6" fill="#dcdcdc" text-anchor="middle" >500</text>
<text x="431.6" y="489.78" font-size="6.6" fill="#dcdcdc" text-anchor="middle" >1k</text>
<text x="486.67" y="489.78" font-size="6.6" fill="#dcdcdc" text-anchor="middle" >2k</text>
<text x="541.74" y="489.78" font-size="6.6" fill="#dcdcdc" text-anchor="middle" >4k</text>
<text x="596.81" y="489.78" font-size="6.6" fill="#dcdcdc" text-anchor="middle" >8k</text>
<text x="651.88" y="489.78" font-size="6.6" fill="#dcdcdc" text-anchor="middle" >16k</text>
<line x1="119.4" y1="375" x2="670" y2="375" stroke="#6a6a6a" stroke-width="0.9" />
<line x1="636.9" y1="317" x2="636.9" y2="480" stroke="#5c5c5c" stroke-width="0.9" />
<path d="M119.5 398 L123.03 398.01 L126.56 398.02 L130.09 398.04 L133.62 398.05 L137.15 398.07 L140.68 398.08 L144.21 398.1 L147.74 398.12 L151.27 398.14 L154.8 398.16 L158.33 398.19 L161.85 398.22 L165.38 398.25 L168.91 398.28 L172.44 398.31 L175.97 398.35 L179.5 398.39 L183.03 398.42 L186.56 398.46 L190.09 398.5 L193.62 398.54 L197.15 398.57 L200.68 398.6 L204.21 398.64 L207.74 398.66 L211.27 398.69 L214.8 398.71 L218.33 398.73 L221.86 398.75 L225.39 398.77 L228.92 398.79 L232.45 398.82 L235.98 398.85 L239.51 398.88 L243.04 398.93 L246.57 398.98 L250.1 399.05 L253.62 399.12 L257.15 399.22 L260.68 399.33 L264.21 399.45 L267.73 399.6 L271.26 399.76 L274.78 399.95 L278.3 400.15 L281.83 400.37 L285.35 400.61 L288.87 400.87 L292.39 401.14 L295.91 401.43 L299.43 401.75 L302.94 402.08 L306.45 402.44 L309.96 402.84 L313.46 403.28 L316.96 403.77 L320.45 404.31 L323.93 404.91 L327.4 405.56 L330.86 406.27 L334.31 407.04 L337.74 407.86 L341.16 408.73 L344.57 409.65 L347.97 410.61 L351.35 411.62 L354.72 412.65 L358.09 413.7 L361.46 414.75 L364.84 415.81 L368.21 416.85 L371.6 417.86 L375 418.81 L378.42 419.7 L381.86 420.5 L385.31 421.19 L388.79 421.77 L392.28 422.27 L395.78 422.72 L399.3 423.12 L402.82 423.51 L406.34 423.86 L409.86 424.13 L413.38 424.29 L416.91 424.29 L420.42 424.11 L423.94 423.8 L427.45 423.37 L430.95 422.87 L434.45 422.32 L437.94 421.73 L441.41 421.08 L444.86 420.34 L448.29 419.51 L451.69 418.57 L455.05 417.52 L458.39 416.38 L461.7 415.15 L465 413.87 L468.28 412.55 L471.55 411.21 L474.81 409.85 L478.06 408.48 L481.3 407.09 L484.54 405.69 L487.78 404.28 L491.01 402.87 L494.24 401.44 L497.46 400.01 L500.68 398.56 L503.9 397.1 L507.11 395.63 L510.32 394.17 L513.54 392.73 L516.78 391.31 L520.03 389.94 L523.3 388.62 L526.6 387.37 L529.93 386.17 L533.27 385.05 L536.64 383.99 L540.04 383 L543.45 382.09 L546.88 381.25 L550.32 380.48 L553.78 379.77 L557.25 379.13 L560.74 378.55 L564.23 378.03 L567.73 377.57 L571.24 377.16 L574.75 376.8 L578.26 376.48 L581.78 376.2 L585.31 375.96 L588.83 375.75 L592.35 375.58 L595.88 375.43 L599.41 375.31 L602.94 375.22 L606.47 375.14 L609.99 375.09 L613.52 375.05 L617.05 375.02 L620.58 375 L624.11 375 L627.64 374.99 L631.17 375 L634.7 375 L638.23 375 L641.76 375.01 L645.29 375.01 L648.82 375.01 L652.35 375.01 L655.88 375.01 L659.41 375 L662.94 375 L666.47 375 L670 375" stroke="#129312" stroke-width="1.35" fill="none" stroke-linejoin="round"/>
<text x="124" y="325.29" font-size="6.36" fill="#f0f0f0" font-weight="bold" >Magnitude</text>
<path d="M158.4 321.1 h4.6 l-2.3 4.2z" fill="#f0f0f0"/>
<text x="658.8" y="327.06" font-size="7.38" fill="#f0f0f0" text-anchor="end" font-weight="bold" >SoundFlower</text>
<text x="672.6" y="326.8" font-size="6.4" fill="#dcdcdc" >80</text>
<text x="672.6" y="335.3" font-size="6.4" fill="#dcdcdc" >60</text>
<text x="672.6" y="343.8" font-size="6.4" fill="#dcdcdc" >40</text>
<text x="672.6" y="352.3" font-size="6.4" fill="#dcdcdc" >20</text>
<path d="M661.2 336.6 h4.2 l3.1 3.7 l-3.1 3.7 h-4.2z" fill="#e8e8e8"/>
<path d="M690.4 30.6 H788.1 A4 4 0 0 1 792.1 34.6 V71 A4 4 0 0 1 788.1 75 H690.4 A1.5 1.5 0 0 1 688.9 73.5 V32.1 A1.5 1.5 0 0 1 690.4 30.6Z" fill="#0a0a0a" stroke="#46566a" stroke-width="1"/>
<text x="736" y="39.41" font-size="6.96" fill="#e8e8e8" text-anchor="middle" >input 1</text>
<text x="751.3" y="61.93" font-size="25.5" fill="#ffffff" text-anchor="middle" font-weight="bold" >0.0</text>
<text x="736" y="71.85" font-size="7.35" fill="#e8e8e8" text-anchor="middle" >dBA SPL Slow</text>
<text x="692" y="53.08" font-size="6.9" fill="#e0e0e0" >Max</text>
<text x="692" y="61.48" font-size="6.9" fill="#e0e0e0" >0.0</text>
<circle cx="697.1" cy="69.6" r="3" fill="#f20d0d"/>
<path d="M780.3 37.6 h3.4 l-1.7 2.4z M780.3 70 h3.4 l-1.7 2.4z" fill="#f0f0f0"/>
<rect x="688.9" y="79.4" width="103" height="9.6" fill="url(#gBtn)" rx="1.5" stroke="#20262f" stroke-width="0.6"/>
<line x1="723.6" y1="79.8" x2="723.6" y2="88.6" stroke="#232a34" stroke-width="0.8" />
<line x1="757.4" y1="79.8" x2="757.4" y2="88.6" stroke="#232a34" stroke-width="0.8" />
<text x="706.2" y="86.29" font-size="6.65" fill="#ececec" text-anchor="middle" >Spectrum</text>
<text x="740.5" y="86.29" font-size="6.65" fill="#ececec" text-anchor="middle" >Transfer</text>
<text x="774.6" y="86.29" font-size="6.65" fill="#ececec" text-anchor="middle" >Impulse</text>
<rect x="688.9" y="92.7" width="34.7" height="9.7" fill="url(#gBtn)" rx="1.5" stroke="#20262f" stroke-width="0.6"/>
<rect x="723.6" y="92.7" width="68.3" height="9.7" fill="url(#gBtnSel)" rx="1.5" stroke="#20262f" stroke-width="0.6"/>
<line x1="757.4" y1="93.1" x2="757.4" y2="102" stroke="#4a525e" stroke-width="0.8" />
<rect x="697.4" y="94.6" width="17.4" height="5.8" fill="none" stroke="#cdd2dc" stroke-width="0.75"/>
<rect x="731.2" y="94.3" width="18.2" height="6.2" fill="none" rx="1" stroke="#d8d234" stroke-width="0.8"/>
<line x1="731.2" y1="97.4" x2="749.4" y2="97.4" stroke="#d8d234" stroke-width="0.8" />
<text x="774.2" y="99.79" font-size="6.65" fill="#f0f0f0" text-anchor="middle" >Live IR</text>
<line x1="688.9" y1="105.3" x2="792.1" y2="105.3" stroke="#4a5868" stroke-width="0.9" />
<rect x="690" y="109.2" width="44" height="9.7" fill="url(#gBtnGrey)" rx="1.5" stroke="#3a3e46" stroke-width="0.6"/>
<text x="712.2" y="116.21" font-size="6.7" fill="#f2f2f2" text-anchor="middle" >Pink Noise</text>
<rect x="737" y="110.3" width="30" height="8.3" fill="#d3d7d3"/>
<text x="751.6" y="116.89" font-size="6.65" fill="#202020" text-anchor="middle" >-14 dB</text>
<rect x="769.9" y="109.5" width="21.3" height="9.5" fill="url(#gBtn)" rx="1.5" stroke="#20262f" stroke-width="0.6"/>
<line x1="780.5" y1="109.9" x2="780.5" y2="118.6" stroke="#232a34" stroke-width="0.8" />
<text x="775.2" y="116.92" font-size="7" fill="#e8e8e8" text-anchor="middle" >+</text>
<text x="786" y="116.72" font-size="7" fill="#e8e8e8" text-anchor="middle" >-</text>
<path d="M689.1999999999999 124.3 H788.6 A3.5 3.5 0 0 1 792.1 127.6 V490.1 A3.5 3.5 0 0 1 788.6 493.6 H689.1999999999999Z" fill="#36414e" stroke="#5a6878" stroke-width="0.9"/>
<text x="740" y="136.99" font-size="7.48" fill="#eaeaea" text-anchor="middle" font-family="'DejaVu Sans', 'Liberation Sans', sans-serif" >Transfer Function</text>
<line x1="694.4" y1="143.4" x2="787" y2="143.4" stroke="#566678" stroke-width="0.8" />
<text x="744" y="156.89" font-size="6.65" fill="#e6e6e6" text-anchor="end" >Averaging:</text>
<rect x="747.2" y="149.2" width="40" height="10.7" fill="#cbcfcc" rx="1.6"/>
<text x="749.8" y="157.17" font-size="7" fill="#1a1a1a" stroke="#1a1a1a" stroke-width="0.18">16</text>
<path d="M780.9 154.95 h3.6 l-1.8 2.5z" fill="#0c0c0c"/>
<text x="744" y="170.89" font-size="6.65" fill="#e6e6e6" text-anchor="end" >Phase Smooth:</text>
<rect x="747.2" y="163.2" width="40" height="10.6" fill="#cbcfcc" rx="1.6"/>
<text x="749.8" y="171.12" font-size="7" fill="#1a1a1a" stroke="#1a1a1a" stroke-width="0.18">1/24 Oct</text>
<path d="M780.9 168.9 h3.6 l-1.8 2.5z" fill="#0c0c0c"/>
<text x="744" y="184.69" font-size="6.65" fill="#e6e6e6" text-anchor="end" >Mag Smooth:</text>
<rect x="747.2" y="177.1" width="40" height="10.6" fill="#cbcfcc" rx="1.6"/>
<text x="749.8" y="185.02" font-size="7" fill="#1a1a1a" stroke="#1a1a1a" stroke-width="0.18">1/24 Oct</text>
<path d="M780.9 182.8 h3.6 l-1.8 2.5z" fill="#0c0c0c"/>
<line x1="694.4" y1="193.6" x2="787" y2="193.6" stroke="#566678" stroke-width="0.8" />
<text x="694.4" y="206.83" font-size="6.75" fill="#e6e6e6" >Group:</text>
<rect x="718.8" y="199" width="55.4" height="10.7" fill="#cbcfcc" rx="1.6"/>
<text x="721.4" y="207.02" font-size="7.15" fill="#1a1a1a" stroke="#1a1a1a" stroke-width="0.18">SoundFlower</text>
<path d="M767.9 204.75 h3.6 l-1.8 2.5z" fill="#0c0c0c"/>
<rect x="776.7" y="198.8" width="10.1" height="10.7" fill="url(#gBtn)" rx="1.2" stroke="#20262f" stroke-width="0.6"/>
<g stroke="#f2f2f2" fill="none" stroke-linecap="butt"><path d="M779.1 207.7 L784.7 201.9" stroke-width="1.5"/><path d="M784.9 207.7 L779.8 202.6" stroke-width="1.5"/><path d="M778.3 203.7 L781.3 200.9" stroke-width="1.9"/></g><circle cx="784.9" cy="201.7" r="1.5" fill="#f2f2f2"/><path d="M784.6 199.6 L786.6 200.8 L785.2 201.9z" fill="#3a4452"/>
<rect x="694.8" y="213.3" width="91.8" height="9.2" fill="url(#gBtn)" rx="1.5" stroke="#20262f" stroke-width="0.6"/>
<line x1="705.1" y1="213.7" x2="705.1" y2="222.1" stroke="#232a34" stroke-width="0.8" />
<line x1="719.5" y1="213.7" x2="719.5" y2="222.1" stroke="#232a34" stroke-width="0.8" />
<line x1="753.3" y1="213.7" x2="753.3" y2="222.1" stroke="#232a34" stroke-width="0.8" />
<rect x="697.3" y="215.5" width="5" height="4.8" fill="#f4f4f4"/>
<path d="M708.8 215.4 L715.4 217.9 L708.8 220.4z" fill="#f4f4f4"/>
<text x="736.2" y="220.49" font-size="7.2" fill="#ececec" text-anchor="middle" >All Track</text>
<text x="770" y="220.49" font-size="7.2" fill="#ececec" text-anchor="middle" >No Track</text>
<line x1="694.4" y1="226.7" x2="787" y2="226.7" stroke="#566678" stroke-width="0.8" />
<rect x="694.6" y="232" width="82.5" height="40" fill="#4a5868" rx="1.5" stroke="#7f93b5" stroke-width="0.8"/>
<rect x="697.7" y="234.6" width="10.3" height="10.5" fill="url(#gGreen)" rx="1" stroke="#0a5a0a" stroke-width="0.5"/>
<text x="711.6" y="242.58" font-size="7.16" fill="#f0f0f0" >SoundFlower</text>
<path d="M763.8 236.8 L772.8 240 L763.8 243.3z" fill="#22b122"/>
<text x="699" y="250.22" font-size="5.6" fill="#f0f0f0" font-weight="bold" >M</text>
<text x="699" y="256.62" font-size="5.6" fill="#f0f0f0" font-weight="bold" >R</text>
<rect x="704" y="248.3" width="30" height="2.9" fill="#050505"/>
<rect x="704" y="248.3" width="17" height="2.9" fill="#16b516"/>
<rect x="704" y="254" width="30" height="2.9" fill="#050505"/>
<rect x="704" y="254" width="17" height="2.9" fill="#4a8de0"/>
<line x1="723" y1="248.3" x2="723" y2="251.2" stroke="#333" stroke-width="0.5" />
<line x1="723" y1="254" x2="723" y2="256.9" stroke="#333" stroke-width="0.5" />
<line x1="732" y1="248.3" x2="732" y2="251.2" stroke="#333" stroke-width="0.5" />
<line x1="732" y1="254" x2="732" y2="256.9" stroke="#333" stroke-width="0.5" />
<rect x="736.6" y="248" width="26.8" height="9.3" fill="#d9ddd8" stroke="#2a3038" stroke-width="0.7"/>
<text x="748.5" y="255.41" font-size="7.25" fill="#1a1a1a" text-anchor="middle" >65.42</text>
<circle cx="769" cy="252" r="2.5" fill="#6d6762"/>
<text x="705" y="266.81" font-size="6.7" fill="#ececec" >Find</text>
<text x="724.4" y="266.74" font-size="6.5" fill="#ececec" >Track</text>
<text x="750" y="266.92" font-size="7" fill="#ececec" text-anchor="middle" >+</text>
<text x="761.4" y="266.72" font-size="7" fill="#ececec" text-anchor="middle" >-</text>
</svg>
</body></html>
